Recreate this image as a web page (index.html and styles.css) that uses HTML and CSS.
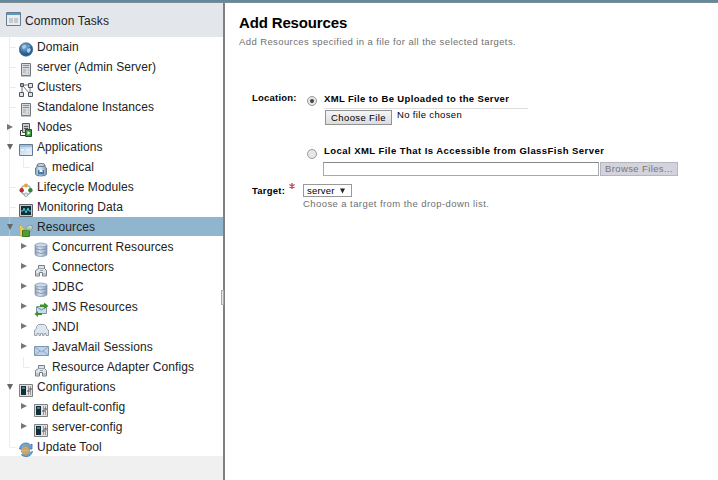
FILE: index.html
```
<!DOCTYPE html>
<html lang="en">
<head>
<meta charset="utf-8">
<title>Add Resources</title>
<link rel="stylesheet" href="styles.css">
</head>
<body>
<svg class="defs" aria-hidden="true">
<defs>
<linearGradient id="steel" x2="1" y2="0"><stop stop-color="#8fa3ba"/><stop offset=".4" stop-color="#dce7f3"/><stop offset="1" stop-color="#8496ad"/></linearGradient>
<linearGradient id="pane" x2="1" y2="1"><stop stop-color="#b3cee9"/><stop offset="1" stop-color="#eef4fa"/></linearGradient>
<radialGradient id="ball" cx=".4" cy=".3"><stop stop-color="#8dbfe2"/><stop offset="1" stop-color="#285f92"/></radialGradient>
</defs>
<symbol id="globe" viewBox="0 0 15 15"><circle cx="7" cy="7.500" r="6.700" fill="url(#ball)" stroke="#37648c" stroke-width=".7"/><path d="M3 4l3-1 1 1-1 2-2 1M8 7l3-1 1 2-2 3-2-1zM9 3l2 1-1 1z" fill="#a7cee8"/></symbol>
<symbol id="server" viewBox="0 0 15 15"><path d="M2.500 1.500h9v12h-9z" fill="#d5d8dc" stroke="#73777c"/><path d="M4 3.500h6M4 5.500h6" stroke="#8b9096"/><path d="M4 8h3M4 10h3M9 8h1M9 11h1" stroke="#a4a9ae"/><path d="M2 14h10" stroke="#888"/></symbol>
<symbol id="cluster" viewBox="0 0 15 15"><path d="M3 3h8v9M3 3v8M4 4l6 7" fill="none" stroke="#777"/><g fill="#e0e4e9" stroke="#50565e"><path d="M1.500 1.500h3v3h-3z" fill="#8fb2cf"/><path d="M9.500 1.500h4v4h-4zM.5 10.500h4v4h-4zM9.500 10.500h4v4h-4z"/></g></symbol>
<symbol id="node" viewBox="0 0 15 15"><path d="M3.500 1.500h7v9h-7z" fill="#c5c8cc" stroke="#555"/><path d="M5 4.500h4M5 6.500h4" stroke="#555"/><path d="M3 8.500H1.500v5H7" fill="none" stroke="#333"/><path d="M6.500 7.500h6v7h-6z" fill="#3b963a" stroke="#185b1c"/><path d="M8.500 9l3 2-3 2z" fill="#fff"/></symbol>
<symbol id="window" viewBox="0 0 15 15"><path d="M.5 2.500h13v11H.5z" fill="url(#pane)" stroke="#657b91"/><path d="M1 4h12" stroke="#a0bedb" stroke-width="2"/><path d="M2 7h3v2H2zM7 7h4v2H7z" fill="#e4eff9"/></symbol>
<symbol id="jar" viewBox="0 0 15 15"><path d="M3 3v2L1.500 6v6q0 2 5.500 2t5.500-2V6L11 5V3z" fill="url(#steel)" stroke="#57687b" stroke-width=".8"/><ellipse cx="7" cy="3" rx="4" ry="1.600" fill="#b8d7eb" stroke="#506376" stroke-width=".8"/><path d="M4 8h6v4.500H4z" fill="#3f7bad"/><path d="M5.500 8h3v2h-3z" fill="#fff"/></symbol>
<symbol id="ring" viewBox="0 0 15 15"><circle cx="7" cy="8" r="4.800" fill="none" stroke="#99aec0" stroke-width="1.500"/><circle cx="7" cy="3.500" r="2" fill="#ed9e37"/><circle cx="2.700" cy="8.200" r="2.200" fill="#c52b2b"/><circle cx="11.400" cy="8.200" r="2.200" fill="#33833a"/><circle cx="7" cy="12.700" r="1.800" fill="#e8e8e8" stroke="#88929a" stroke-width=".7"/></symbol>
<symbol id="monitor" viewBox="0 0 15 15"><path d="M.5 2.500h13v12H.5z" fill="#c9c9c9" stroke="#636363"/><path d="M2 4h10v9H2z" fill="#112f3b"/><path d="M2 9h2l1-3 2 5 2-5 1 3h2" fill="none" stroke="#50c9cf"/></symbol>
<symbol id="resource" viewBox="0 0 15 15"><path d="M.5 2l5 5v7h-5z" fill="#edc860" stroke="#c79a36" stroke-width=".6"/><path d="M7 7q1-4 4-4t2.500 3L11 10" fill="#c5d1d8" stroke="#849aa7"/><path d="M3.500 8.500h7v6h-7z" fill="#559b35" stroke="#3b7b26"/><path d="M4 8l2-1.500h6L11 8.500z" fill="#8cc55c"/></symbol>
<symbol id="database" viewBox="0 0 15 15"><path d="M1 3v9.500q1 2 6 2t6-2V3z" fill="url(#steel)" stroke="#7f93ac" stroke-width=".7"/><ellipse cx="7" cy="3" rx="6" ry="1.900" fill="#c8d9ec" stroke="#8297b0" stroke-width=".7"/><path d="M1 6.500q6 3 12 0M1 10q6 3 12 0" fill="none" stroke="#8397b1"/></symbol>
<symbol id="plug" viewBox="0 0 15 15"><path d="M1.500 14V8.500l3-2V3.500h6v3l2 2V14h-4v-3.500h-3V14z" fill="#e1e5ea" stroke="#767e87"/><path d="M2 12h3M9 12h3M5 6.500h5M6 8.500h3" stroke="#9aa2aa"/></symbol>
<symbol id="jms" viewBox="0 0 15 15"><path d="M2.500 4.500h10v7h-10z" fill="#c8dceb" stroke="#8095ab"/><path d="M3 5l4.500 3L12 5" fill="none" stroke="#7089a2"/><path d="M6 2.500h4V.500L14.500 4 10 7V5H6zM8 13H4v2L.5 12 4 9v2h4z" fill="#3d9328"/></symbol>
<symbol id="jndi" viewBox="0 0 15 15"><path d="M.5 13.500V8l2-1.500v-2l2-2h6l2 2v2l2 1.500v5.500H12v-2h-2v2H8.500v-2h-2v2H5v-2H3v2z" fill="#dde6ee" stroke="#98a2ad"/></symbol>
<symbol id="mail" viewBox="0 0 15 15"><path d="M.5 4.500h14v9H.5z" fill="#bcd3e9" stroke="#7f96b0"/><path d="M1 5l6.500 5L14 5M1 13l5-4M14 13L9 9" fill="none" stroke="#8fa3bb"/></symbol>
<symbol id="config" viewBox="0 0 15 15"><path d="M.5 2.500h13v12H.5z" fill="#e2e2e2" stroke="#808080"/><path d="M2 4h5v9H2z" fill="#142d37"/><path d="M3 6h3" stroke="#3c8990" stroke-width="2"/><path d="M9.500 4v9M11.500 4v9" stroke="#999"/><path d="M8 9h3M10 7h3" stroke="#555"/></symbol>
<symbol id="update" viewBox="0 0 15 15"><path d="M.5 7q1-6 6.500-6 3 0 4.500 2L13 2v5H8.500l2-2Q8 3 4 7zM13.500 9q-1 5.500-6.500 5.500-3 0-5-2" fill="#69a9dd" stroke="#2e70a9" stroke-width=".8"/><circle cx="6.500" cy="8.500" r="4.200" fill="#d0ae76" stroke="#b08d5e" stroke-width=".7"/><path d="M4 7l3-1 3 2M4 10l3 1 3-2" fill="none" stroke="#bb9963" stroke-width=".7"/></symbol>
<symbol id="right" viewBox="0 0 6 6"><path d="M0 0l6 3-6 3z" fill="#777"/></symbol>
<symbol id="down" viewBox="0 0 6 6"><path d="M0 0h6L3 6z" fill="#666"/></symbol>
</svg>
<div class="topbar"></div>
<div class="layout">
<aside class="sidebar">
<header class="tasks"><svg class="tasks-icon" viewBox="0 0 15 14"><path d="M.5.500h14v13H.5z" fill="#e9edf0" stroke="#657c91"/><path d="M1 2h13" stroke="#5b9bc0" stroke-width="2"/><path d="M3 6h4v5H3zM8 6h4v5H8z" fill="#c5cacf"/></svg><span class="tasks-label">Common Tasks</span></header>
<nav class="tree">
<div class="row leaf"><svg class="icon"><use href="#globe"/></svg><span class="label">Domain</span></div>
<div class="row leaf"><svg class="icon"><use href="#server"/></svg><span class="label">server (Admin Server)</span></div>
<div class="row leaf"><svg class="icon"><use href="#cluster"/></svg><span class="label">Clusters</span></div>
<div class="row leaf"><svg class="icon"><use href="#server"/></svg><span class="label">Standalone Instances</span></div>
<div class="row"><svg class="arrow"><use href="#right"/></svg><svg class="icon"><use href="#node"/></svg><span class="label">Nodes</span></div>
<div class="row"><svg class="arrow"><use href="#down"/></svg><svg class="icon"><use href="#window"/></svg><span class="label">Applications</span></div>
<div class="row child leaf"><svg class="icon"><use href="#jar"/></svg><span class="label">medical</span></div>
<div class="row leaf"><svg class="icon"><use href="#ring"/></svg><span class="label">Lifecycle Modules</span></div>
<div class="row leaf"><svg class="icon"><use href="#monitor"/></svg><span class="label">Monitoring Data</span></div>
<div class="row selected"><svg class="arrow"><use href="#down"/></svg><svg class="icon"><use href="#resource"/></svg><span class="label">Resources</span></div>
<div class="row child"><svg class="arrow"><use href="#right"/></svg><svg class="icon"><use href="#database"/></svg><span class="label">Concurrent Resources</span></div>
<div class="row child"><svg class="arrow"><use href="#right"/></svg><svg class="icon"><use href="#plug"/></svg><span class="label">Connectors</span></div>
<div class="row child"><svg class="arrow"><use href="#right"/></svg><svg class="icon"><use href="#database"/></svg><span class="label">JDBC</span></div>
<div class="row child"><svg class="arrow"><use href="#right"/></svg><svg class="icon"><use href="#jms"/></svg><span class="label">JMS Resources</span></div>
<div class="row child"><svg class="arrow"><use href="#right"/></svg><svg class="icon"><use href="#jndi"/></svg><span class="label">JNDI</span></div>
<div class="row child"><svg class="arrow"><use href="#right"/></svg><svg class="icon"><use href="#mail"/></svg><span class="label">JavaMail Sessions</span></div>
<div class="row child leaf"><svg class="icon"><use href="#plug"/></svg><span class="label">Resource Adapter Configs</span></div>
<div class="row"><svg class="arrow"><use href="#down"/></svg><svg class="icon"><use href="#config"/></svg><span class="label">Configurations</span></div>
<div class="row child"><svg class="arrow"><use href="#right"/></svg><svg class="icon"><use href="#config"/></svg><span class="label">default-config</span></div>
<div class="row child"><svg class="arrow"><use href="#right"/></svg><svg class="icon"><use href="#config"/></svg><span class="label">server-config</span></div>
<div class="row leaf last"><svg class="icon"><use href="#update"/></svg><span class="label">Update Tool</span></div>
</nav>
<div class="grip"></div>
</aside>
<main class="content">
<h1>Add Resources</h1>
<p class="intro">Add Resources specified in a file for all the selected targets.</p>
<form class="form">
<div class="field upload">
<span class="caption">Location:</span>
<span class="radio checked"></span>
<div class="body"><div class="option first">XML File to Be Uploaded to the Server</div><div class="file"><span class="choose">Choose File</span><span class="chosen">No file chosen</span></div></div>
</div>
<div class="field local">
<span class="caption"></span>
<span class="radio"></span>
<div class="body"><div class="option second">Local XML File That Is Accessible from GlassFish Server</div><div class="path"><span class="input"></span><span class="browse">Browse Files...</span></div></div>
</div>
<div class="field target">
<span class="caption">Target:<svg class="required" viewBox="0 0 6 6"><path d="M3 0v6M.4 1.500l5.200 3M.4 4.500l5.200-3" stroke="#d04451" stroke-width="1.300"/></svg></span>
<div class="body"><span class="select">server<svg class="caret" viewBox="0 0 6 6"><path d="M0 0h6L3 6z" fill="#222"/></svg></span><div class="hint">Choose a target from the drop-down list.</div></div>
</div>
</form>
</main>
</div>
</body>
</html>
```
FILE: styles.css
```
* { box-sizing: border-box; }
body { margin: 0; height: 480px; overflow: hidden; background: #fff; color: #000; font-family: "Liberation Sans", Arial, sans-serif; font-size: 12px; }
svg { display: block; flex: none; }
.defs { position: absolute; width: 0; height: 0; }
.topbar { height: 3px; background: #5e8aa3; border-bottom: 1px solid #84898c; }
.layout { display: flex; height: 477px; }
.sidebar { position: relative; width: 225px; flex: none; background: #f0f0f0; border-right: 2px solid #808080; }
.tasks { height: 34px; display: flex; align-items: flex-start; padding: 9px 0 0 6px; background: #e3e6eb; }
.tasks-icon { width: 15px; height: 14px; margin-right: 4px; }
.tasks-label { line-height: 18px; letter-spacing: .14px; color: #222; }
.tree { background: #fff; height: 419px; }
.row { height: 20px; display: flex; padding-left: 19px; background: linear-gradient(#ececec, #ececec) 9px 0 / 1px 20px no-repeat; }
.leaf { background: linear-gradient(#ececec, #ececec) 9px 0 / 1px 20px no-repeat, linear-gradient(#ececec, #ececec) 10px 10px / 6px 1px no-repeat; }
.child { padding-left: 34px; }
.child.leaf { background: linear-gradient(#ececec, #ececec) 9px 0 / 1px 20px no-repeat, linear-gradient(#ececec, #ececec) 23px 0 / 1px 11px no-repeat, linear-gradient(#ececec, #ececec) 23px 10px / 7px 1px no-repeat; }
.last { background-size: 1px 10px, 6px 1px; }
.selected { height: 19px; margin-bottom: 1px; background: linear-gradient(#a9c8dc, #a9c8dc) 9px 0 / 1px 19px no-repeat #8fb5cf; }
.arrow { width: 6px; height: 6px; margin: 7px 6px 0 -12px; }
.child .arrow { margin: 6px 7px 0 -13px; }
.icon { width: 15px; height: 15px; margin: 5px 3px 0 0; }
.label { line-height: 20px; letter-spacing: .08px; white-space: nowrap; color: #222; }
.grip { position: absolute; left: 221px; top: 287px; width: 3px; height: 15px; background: #e5e5e5; border: 1px solid #aaa; }
.content { flex: 1; padding: 11px 0 0 14px; }
h1 { margin: 0; font-size: 15px; line-height: 18px; letter-spacing: -.15px; }
.intro { margin: 3px 0 0; font-size: 9.500px; line-height: 14px; letter-spacing: .4px; color: #707070; }
.form { margin: 42px 0 0 13px; font-size: 9.500px; }
.field { display: flex; }
.upload { height: 55px; }
.local { height: 38px; }
.caption { width: 55px; font-weight: bold; line-height: 13px; letter-spacing: .22px; }
.radio { width: 10px; height: 10px; margin: 5px 7px 0 0; border: 1px solid #999; border-radius: 50%; background: #e7e7e7; display: grid; place-items: center; }
.local .radio { margin-top: 3px; }
.radio.checked::after { content: ""; width: 4px; height: 4px; border-radius: 50%; background: #444; }
.option { font-weight: bold; line-height: 13px; letter-spacing: .36px; white-space: nowrap; }
.first { width: 204px; height: 18px; padding-top: 1px; border-bottom: 1px solid #ddd; }
.second { letter-spacing: .45px; height: 16px; line-height: 9px; }
.file { display: flex; padding-left: 1px; margin-top: 1px; }
.choose { width: 67px; height: 15px; border: 1px solid #929292; background: linear-gradient(#f5f5f5, #dcdcdc); line-height: 14px; text-align: center; letter-spacing: .38px; }
.chosen { margin-left: 5px; line-height: 10px; letter-spacing: .35px; }
.path { display: flex; margin-left: -1px; }
.input { width: 276px; height: 14px; border: 1px solid #aaa; border-top-color: #888; }
.browse { width: 78px; height: 14px; margin-left: 1px; border: 1px solid #b4b5bd; background: #d2d3dc; color: #777; line-height: 11px; text-align: center; letter-spacing: .38px; }
.target .caption { width: 51px; display: flex; }
.required { width: 6px; height: 6px; margin: -1px 0 0 4px; }
.select { width: 49px; height: 13px; display: flex; align-items: center; padding-left: 3px; border: 1px solid #999; letter-spacing: .22px; line-height: 9px; }
.caret { width: 5px; height: 6px; margin-left: 5px; }
.hint { line-height: 13px; color: #707070; letter-spacing: .42px; white-space: nowrap; }
```
